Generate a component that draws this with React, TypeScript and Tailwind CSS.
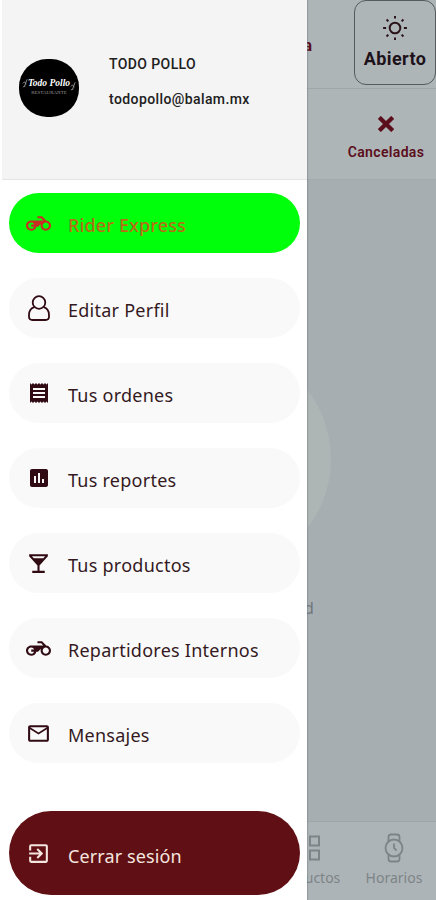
import React from 'react';
import { MdReceipt, MdAssessment, MdLocalBar, MdMailOutline, MdExitToApp } from 'react-icons/md';
import { ImCross } from 'react-icons/im';

interface MenuItem {
  label: string;
  icon: React.ReactNode;
}

function Motorcycle() {
  return (
    <svg viewBox="0 0 24 24" width="25" height="25" fill="currentColor">
      <path d="M19.44 9.03L15.41 5H11v2h3.59l2 2H5c-2.8 0-5 2.2-5 5s2.2 5 5 5c2.46 0 4.45-1.69 4.9-4h1.65l2.77-2.77c-.21.54-.32 1.14-.32 1.77 0 2.8 2.2 5 5 5s5-2.2 5-5c0-2.65-1.97-4.77-4.56-4.97zM7.82 15C7.4 16.15 6.28 17 5 17c-1.63 0-3-1.37-3-3s1.37-3 3-3c1.28 0 2.4.85 2.82 2H5v2h2.82zM19 17c-1.66 0-3-1.34-3-3s1.34-3 3-3 3 1.34 3 3-1.34 3-3 3z" />
    </svg>
  );
}

function UserOutline() {
  return (
    <svg viewBox="0 0 24 26" width="24" height="26" fill="none" stroke="currentColor" strokeWidth="1.8">
      <circle cx="12" cy="7.5" r="6.3" />
      <path d="M7.2 12.2C4 13.300 2 16.500 2 20V21.500Q2 25 5.500 25H18.500Q22 25 22 21.500V20C22 16.500 20 13.300 16.800 12.200" />
    </svg>
  );
}

function Sun() {
  return (
    <svg viewBox="0 0 24 24" width="26" height="26" fill="none" stroke="currentColor" strokeWidth="1.8">
      <circle cx="12" cy="12" r="4.9" />
      <path d="M12 1v2.2M12 20.8V23M1 12h2.800M20.200 12H23M4.200 4.200l1.700 1.700M18.100 18.100l1.700 1.700M19.800 4.200l-1.700 1.700M5.900 18.100l-1.700 1.700" />
    </svg>
  );
}

function Watch() {
  return (
    <svg viewBox="0 0 20 30" width="20" height="30" fill="none" stroke="currentColor" strokeWidth="1.8">
      <circle cx="10" cy="15" r="8.5" />
      <path d="M4.5 8.5V4Q4.5 1.5 7 1.5H13Q15.5 1.5 15.5 4V8.5M4.5 21.5V26Q4.5 28.5 7 28.5H13Q15.5 28.5 15.5 26V21.5M10 10.5V15L12.5 17.5" />
    </svg>
  );
}

function Flourish({ className }: { className?: string }) {
  return (
    <svg viewBox="0 0 7 12" width="6" height="11" fill="none" stroke="#aaa" strokeWidth="0.9" className={className}>
      <path d="M6 1L3 9M1 6L3 4L5 7M1 10L4 9" />
    </svg>
  );
}

const items: MenuItem[] = [
  { label: 'Editar Perfil', icon: <UserOutline /> },
  { label: 'Tus ordenes', icon: <MdReceipt size={24} /> },
  { label: 'Tus reportes', icon: <MdAssessment size={24} /> },
  { label: 'Tus productos', icon: <MdLocalBar size={25} /> },
  { label: 'Repartidores Internos', icon: <Motorcycle /> },
  { label: 'Mensajes', icon: <MdMailOutline size={25} /> },
];

function Background() {
  return (
    <div className="flex h-full flex-col bg-[#a7aeb2]">
      <div className="flex h-[89px] shrink-0 justify-end border-b border-[#a0a7ab] bg-[#aeb5b7] font-[Roboto,sans-serif]">
        <span className="mt-[38px] mr-[42px] h-4 text-[16px] leading-4 font-bold text-[#5b0e1c]">a</span>
        <div className="flex h-[85px] w-[82px] flex-col items-center rounded-xl border border-[#555a5d] pt-[14px] text-[#291319]">
          <Sun />
          <span className="mt-[6px] text-[18px] leading-6 font-bold tracking-[0.4px] text-[#1d1219]">Abierto</span>
        </div>
      </div>
      <div className="flex h-[91px] shrink-0 justify-end border-b border-[#a3aaae] bg-[#aeb5b7] font-[Roboto,sans-serif] text-[#5b0e1c]">
        <div className="flex w-[100px] flex-col items-center pt-[27px]">
          <ImCross size={16} />
          <span className="mt-[10px] text-[14px] leading-5 font-semibold tracking-[0.35px]">Canceladas</span>
        </div>
      </div>
      <div className="flex flex-1 flex-col items-center overflow-hidden">
        <div className="mt-[166px] size-[226px] shrink-0 rounded-full bg-[#adb5b5]" />
        <div className="mt-[26px] w-full pl-[304px] text-[16px] leading-5 text-[#70777b]">d</div>
      </div>
      <div className="flex h-[79px] shrink-0 justify-end border-t border-[#9fa6aa] bg-[#adb4b7] text-[14px] text-[#7d8488]">
        <div className="flex w-[84px] flex-col items-center pt-[13px]">
          <svg viewBox="0 0 26 26" width="26" height="26" fill="none" stroke="currentColor" strokeWidth="2" className="mr-[5px]">
            <path d="M1 1.5h9v9H1zM15 1.5h9v9h-9zM1 15.5h9v9H1zM15 15.5h9v9h-9z" />
          </svg>
          <span className="mt-[7px] mr-[6px] leading-5">Productos</span>
        </div>
        <div className="flex w-[84px] flex-col items-center pt-[11px]">
          <Watch />
          <span className="mt-[5px] leading-5">Horarios</span>
        </div>
      </div>
    </div>
  );
}

export default function App() {
  return (
    <div className="relative h-[900px] w-[436px] overflow-hidden font-['Noto_Sans',sans-serif]">
      <Background />

      {/* Side drawer */}
      <aside className="absolute inset-y-0 left-0 flex w-[307px] flex-col bg-white shadow-[1px_0_1px_rgba(110,120,125,0.4)]">
        <header className="ml-0.5 flex h-[180px] shrink-0 items-start border-b border-[#e4e4e4] bg-[#f4f4f4] font-[Roboto,sans-serif]">
          <div className="mt-[59px] ml-[17px] flex h-[58px] w-[60px] items-center justify-center rounded-[28px] bg-black pb-1 font-['Liberation_Serif',serif] text-white">
            <Flourish className="mb-1.5" />
            <div className="flex flex-col items-center">
              <span className="text-[9.5px] leading-3 font-bold whitespace-nowrap italic">Todo Pollo</span>
              <span className="text-[5px] leading-[7px] text-[#999]">RESTAURANTE</span>
            </div>
            <Flourish />
          </div>
          <div className="mt-[54px] ml-[30px] flex flex-col gap-[15px] text-[14px] leading-5 font-medium text-[#202020]">
            <span className="tracking-[0.4px]">TODO POLLO</span>
            <span className="tracking-[0.4px]">todopollo@balam.mx</span>
          </div>
        </header>

        <nav className="mt-[13px] flex flex-col gap-[25px] pr-[7px] pl-[9px] text-[18px] tracking-[0.25px] text-[#35191f]">
          <button className="flex h-[60px] items-center rounded-full bg-[#00ff0a] text-[#b76d16]">
            <span className="ml-[17px] flex w-[25px] justify-center text-[#cc2b24]"><Motorcycle /></span>
            <span className="mt-1 ml-[17px] font-medium tracking-[0.15px] whitespace-nowrap">Rider Express</span>
          </button>
          {items.map((item) => (
            <button key={item.label} className="flex h-[60px] items-center rounded-full bg-[#f9f9f9]">
              <span className="ml-[17px] flex w-[25px] justify-center text-[#300b13]">{item.icon}</span>
              <span className="mt-1 ml-[17px] whitespace-nowrap">{item.label}</span>
            </button>
          ))}
        </nav>

        <button className="mt-12 mr-[7px] ml-[9px] flex h-[84px] items-center rounded-full bg-[#601014] text-[18px] tracking-[0.1px] text-[#f4e5df]">
          <span className="ml-[17px] flex w-[25px] justify-center"><MdExitToApp size={25} /></span>
          <span className="mt-1.5 ml-[17px]">Cerrar sesión</span>
        </button>
      </aside>
    </div>
  );
}
